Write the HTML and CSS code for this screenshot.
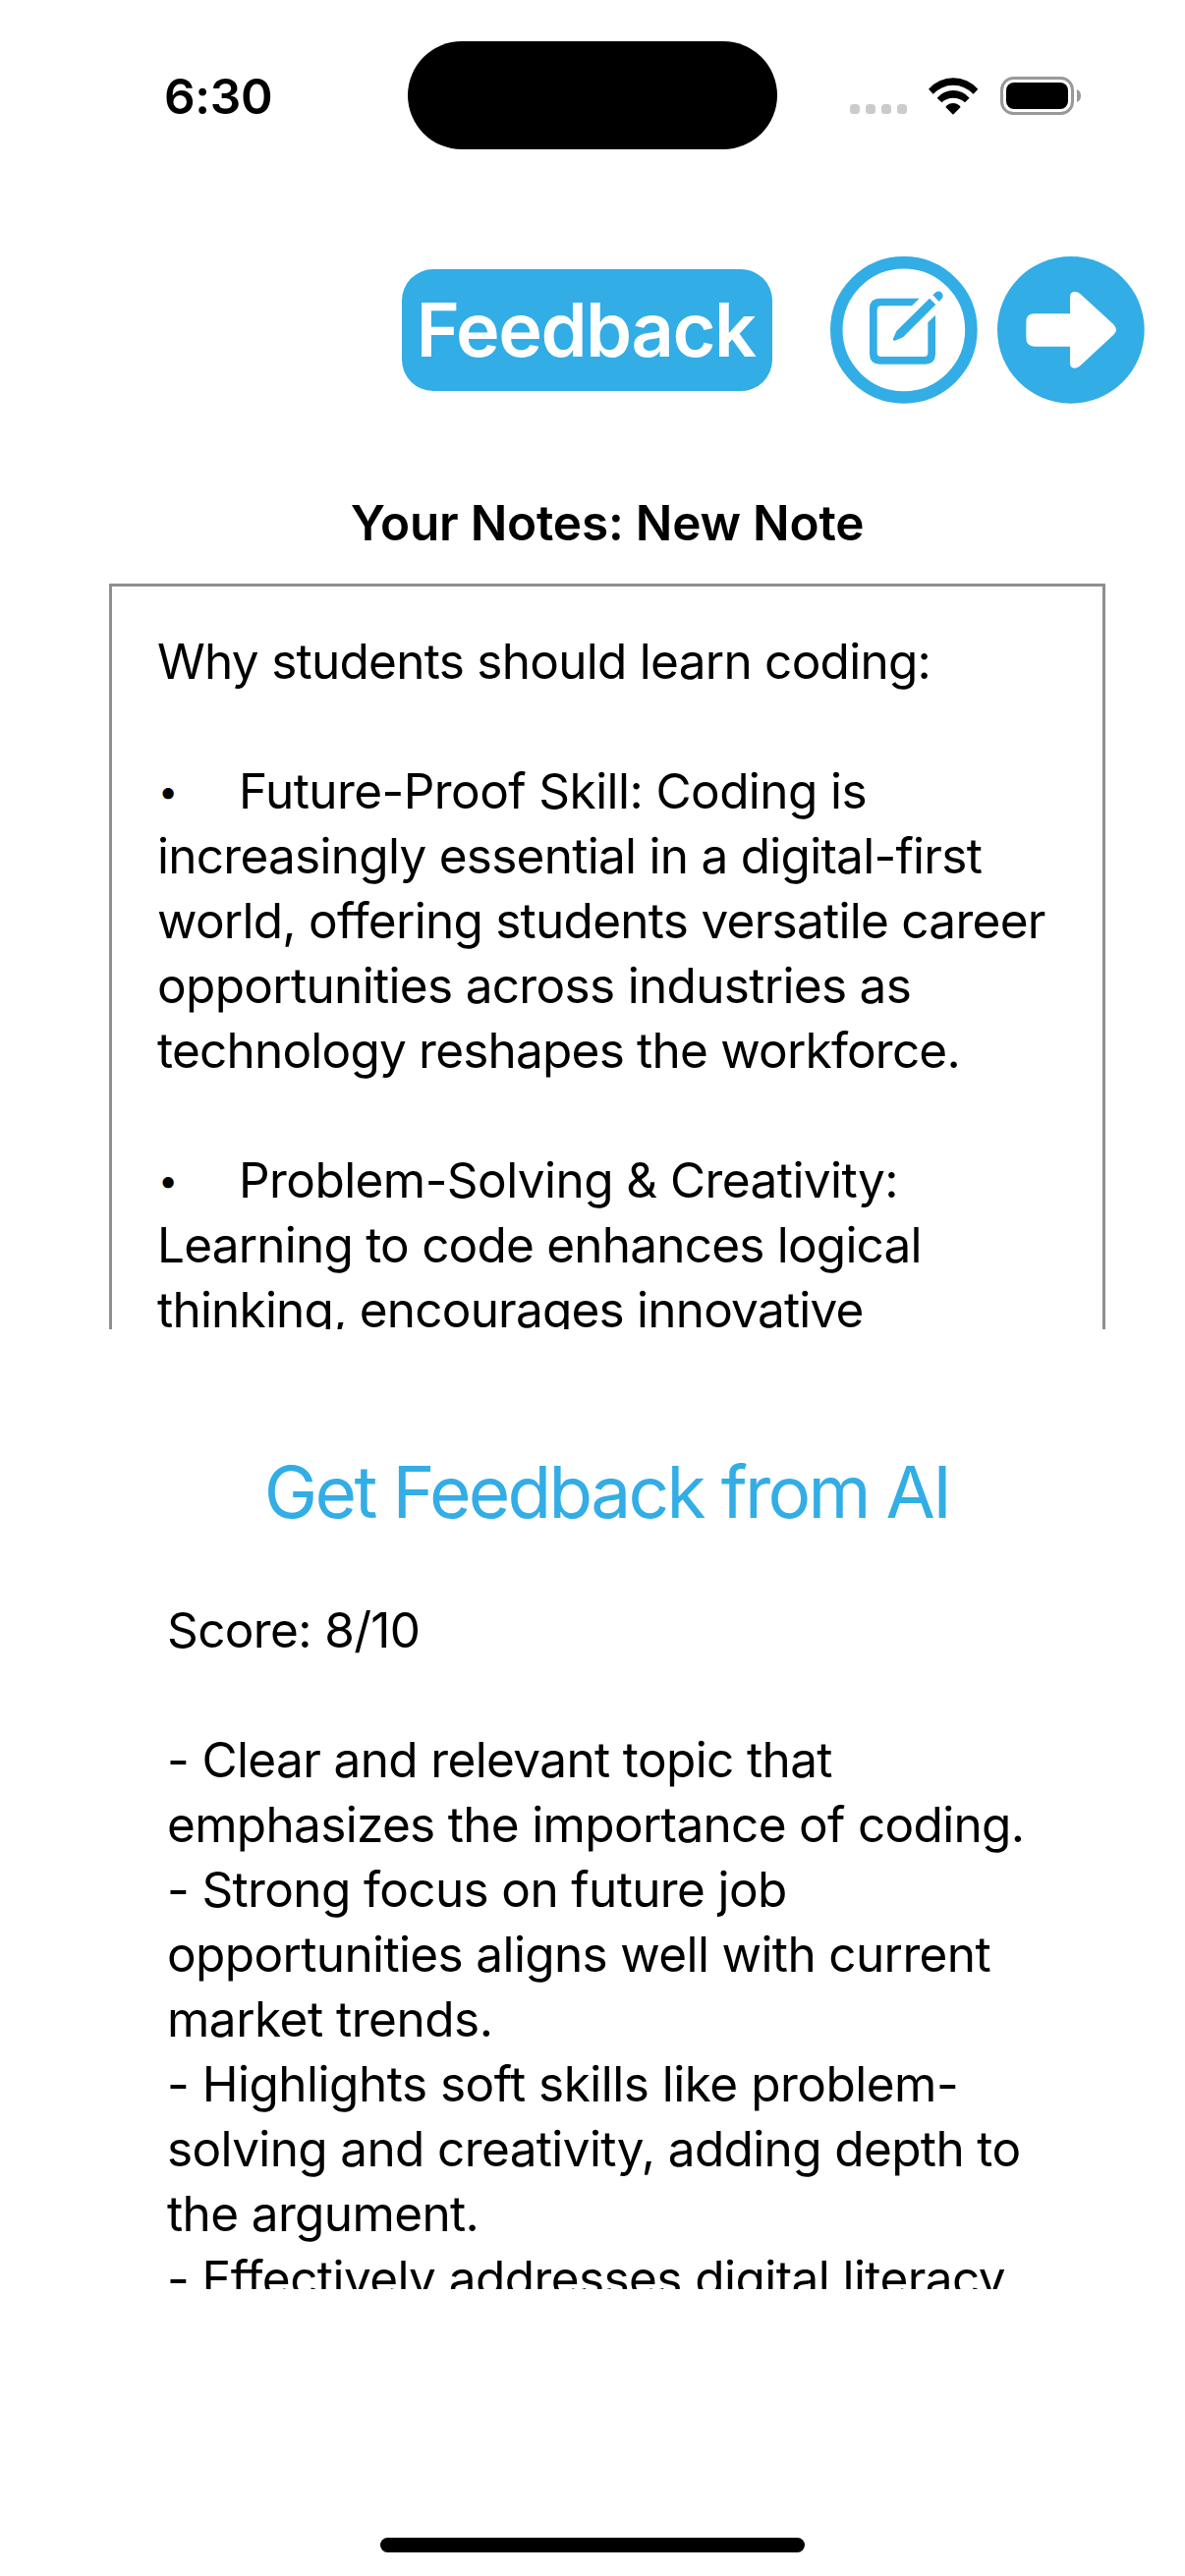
FILE: index.html
```
<!DOCTYPE html>
<html lang="en">
<head>
<meta charset="utf-8">
<title>Feedback</title>
<link rel="stylesheet" href="styles.css">
</head>
<body>
<div class="screen">
  <header class="status-bar">
    <time class="clock">6:30</time>
    <div class="island"></div>
    <div class="indicators">
      <div class="signal"><i></i><i></i><i></i><i></i></div>
      <svg class="wifi" viewBox="436 115 151 114">
        <path d="M436 150A99.7 99.7 0 0 1 587 150L573 165A84.6 84.6 0 0 0 450 165Z"/>
        <path d="M462 177A65 65 0 0 1 561 177L547 191A52 52 0 0 0 476 191Z"/>
        <path d="M488 205A28 28 0 0 1 534 205L511 228Z"/>
      </svg>
      <svg class="battery" viewBox="0 0 83 39">
        <rect class="battery-case" x="1.5" y="1.5" width="72" height="36" rx="12"/>
        <rect x="6" y="6" width="63" height="27" rx="8"/>
        <path class="battery-nub" d="M78 13Q82 14.5 82 19.500T78 26Z"/>
      </svg>
    </div>
  </header>

  <nav class="toolbar">
    <button class="title-button">Feedback</button>
    <div class="actions">
      <svg class="action" viewBox="75 64 450 450" role="img" aria-label="Edit">
        <circle class="ring" cx="299.500" cy="288.500" r="205.700"/>
        <path d="M347 192H226Q195 192 195 223V362Q195 393 226 393H365Q396 393 396 362V243L373 266V359Q373 370 362 370H230Q218 370 218 359V228Q218 215 230 215H324Z"/>
        <path d="M378 192L397 211L297 311L272 321Q265 322 267 315L277 292Z"/>
        <path d="M388 182L396 174Q404 167 413 173Q422 181 417 191L407 202Z"/>
      </svg>
      <svg class="action" viewBox="585 64 450 450" role="img" aria-label="Next">
        <circle cx="809.500" cy="288.500" r="224.500"/>
        <path class="arrow" d="M698 239H807V187Q807 172 822 172Q831 172 838 178L940 272Q948 281 948 289Q948 296 940 303L838 398Q831 405 822 405Q807 405 807 390V339H698Q673 339 673 314V264Q673 239 698 239Z"/>
      </svg>
    </div>
  </nav>

  <main class="content">
    <h1 class="heading">Your Notes: New Note</h1>
    <section class="notes">
      <p>Why students should learn coding:</p>
      <p class="bulleted loose"><span class="bullet">•</span>Future-Proof Skill: Coding is</p>
      <p>increasingly essential in a digital-first<br>world, offering students versatile career<br><span class="snug">opportunities across industries as</span><br><span class="tight">technology reshapes the workforce.</span></p>
      <p class="bulleted loose"><span class="bullet">•</span>Problem-Solving &amp; Creativity:</p>
      <p class="tight">Learning to code enhances logical<br>thinking, encourages innovative</p>
    </section>
    <button class="link-button">Get Feedback from AI</button>
    <section class="feedback">
      <p>Score: 8/10</p>
      <p class="gap">- Clear and relevant topic that<br><span class="snug">emphasizes the importance of coding.</span></p>
      <p>- Strong focus on future job<br>opportunities aligns well with current<br><span class="wide">market trends.</span></p>
      <p><span class="wide">- Highlights soft skills like problem-</span><br>solving and creativity, adding depth to<br>the argument.</p>
      <p class="loose">- Effectively addresses digital literacy</p>
    </section>
  </main>
  <div class="home-indicator"></div>
</div>
</body>
</html>
```
FILE: styles.css
```
* { box-sizing: border-box; }
body, h1, p { margin: 0; }
body { background: #fff; color: #000; }
button { border: 0; padding: 0; background: none; font: inherit; }
svg { display: block; }

.screen {
  width: 1206px;
  height: 2622px;
  overflow: hidden;
  display: flex;
  flex-direction: column;
  font: 400 49.5px/66px Inter, "Liberation Sans", sans-serif;
}

/* Status bar */
.status-bar {
  display: grid;
  grid-template-columns: 415px 376px 415px;
  height: 152px;
  padding-top: 42px;
}
.clock {
  padding: 26px 0 0 167px;
  font-weight: 600;
  line-height: 60px;
  letter-spacing: -0.3px;
}
.island { height: 110px; border-radius: 55px; background: #000; }
.indicators { display: flex; align-items: flex-start; padding: 36px 0 0 74px; }
.signal { display: flex; gap: 6px; padding-top: 28px; }
.signal i { width: 10px; height: 10px; border-radius: 3.5px; background: #cbcbcb; }
.wifi { width: 50.3px; height: 38px; margin: 0.5px 0 0 22.3px; }
.battery { width: 83px; height: 39px; margin-left: 22.4px; }
.battery-case { fill: none; stroke: #999; stroke-width: 3; }
.battery-nub { fill: #999; }

/* Toolbar */
.toolbar { display: flex; align-items: center; height: 150px; margin-top: 109px; padding-left: 409px; }
.title-button {
  width: 377px;
  height: 124px;
  padding-right: 3px;
  border-radius: 32px;
  background: #32ade6;
  color: #fff;
  font-size: 75.6px;
  font-weight: 600;
  line-height: 124px;
  letter-spacing: -1.5px;
}
.actions { display: flex; gap: 20px; margin-left: 59px; }
.action { width: 150px; height: 150px; fill: #32ade6; }
.ring { fill: none; stroke: #32ade6; stroke-width: 37.5; }
.arrow { fill: #fff; }

/* Content */
.content { display: flex; flex-direction: column; width: 1014px; margin: 88px 0 0 111px; }
.heading { font: inherit; font-weight: 600; letter-spacing: -0.2px; text-align: center; }
.notes {
  height: 759px;
  margin-top: 29px;
  padding: 43px 0 0 46px;
  overflow: hidden;
  border: 3px solid #8e8e93;
  border-bottom: 0;
  letter-spacing: -0.73px;
  white-space: nowrap;
}
.bulleted { display: flex; margin-top: 66px; }
.bullet { width: 83px; padding-left: 1px; font-size: 36px; }
.link-button {
  height: 90px;
  margin-top: 121px;
  padding-right: 1px;
  color: #32ade6;
  font-size: 73px;
  line-height: 90px;
  letter-spacing: -2.72px;
}
.feedback {
  height: 705px;
  margin-top: 61px;
  padding: 1px 0 0 59px;
  overflow: hidden;
  letter-spacing: -0.63px;
  white-space: nowrap;
}
.gap { margin-top: 66px; }
.tight { letter-spacing: -0.79px; }
.snug { letter-spacing: -0.68px; }
.loose { letter-spacing: -0.57px; }
.wide { letter-spacing: -0.5px; }

.home-indicator {
  width: 432px;
  height: 15px;
  margin: auto auto 24px;
  border-radius: 8px;
  background: #000;
}
```
